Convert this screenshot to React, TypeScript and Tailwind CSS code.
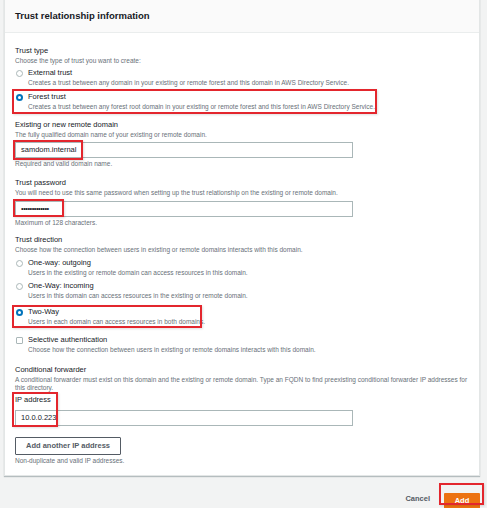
import React from 'react';

const RedBox = ({ className }: { className: string }) => (
  <div
    className={`pointer-events-none absolute border-2 border-[#e3262d] shadow-[1px_1px_2px_rgba(0,0,0,0.12)] ${className}`}
  />
);

const Radio = ({ checked }: { checked?: boolean }) =>
  checked ? (
    <span className="mt-[1.5px] flex h-[7px] w-[7px] shrink-0 items-center justify-center rounded-full bg-[#0073bb]">
      <span className="h-[3px] w-[3px] rounded-full bg-white" />
    </span>
  ) : (
    <span className="mt-[1.5px] h-[7px] w-[7px] shrink-0 rounded-full border border-[#aab7b8] bg-white" />
  );

interface OptionProps {
  title: string;
  desc: string;
  checked?: boolean;
  box?: boolean;
  className?: string;
}

const RadioOption = ({ title, desc, checked, box, className = '' }: OptionProps) => (
  <div className={`flex gap-[5px] pl-[1px] ${className}`}>
    {box ? (
      <span className="mt-[1.5px] h-[7px] w-[7px] shrink-0 rounded-[1px] border border-[#aab7b8] bg-white" />
    ) : (
      <Radio checked={checked} />
    )}
    <div>
      <p className="text-[7.5px] leading-[10px] text-[#16191f]">{title}</p>
      <p className="text-[6.5px] leading-[9px] text-[#687078]">{desc}</p>
    </div>
  </div>
);

const Label = ({ children, className = '' }: { children: React.ReactNode; className?: string }) => (
  <p className={`text-[7.5px] leading-[10px] text-[#16191f] ${className}`}>{children}</p>
);

const Desc = ({ children, className = '' }: { children: React.ReactNode; className?: string }) => (
  <p className={`text-[6.5px] leading-[9px] text-[#687078] ${className}`}>{children}</p>
);

const Input = ({ value, className = '' }: { value: string; className?: string }) => (
  <div
    className={`flex h-[16px] w-[338px] items-center border border-[#aab7b8] bg-white pl-[5px] text-[7.5px] text-[#16191f] ${className}`}
  >
    {value}
  </div>
);

export default function App() {
  return (
    <div
      className="min-h-[508px] w-[487px] bg-[#f2f3f3] pl-[4px] pr-[7px]"
      style={{ fontFamily: '"Liberation Sans", Arial, sans-serif' }}
    >
      <div className="-mt-px border border-[#e3e6e6] bg-white shadow-[0_1px_1px_rgba(0,28,36,0.25)]">
        <div className="flex h-[33px] items-center border-b border-[#eaeded] bg-[#fafafa] px-[10px]">
          <h2 className="text-[9.5px] font-bold text-[#16191f]">Trust relationship information</h2>
        </div>

        <div className="px-[10px] pb-[10px] pt-[13px]">
          <Label>Trust type</Label>
          <Desc>Choose the type of trust you want to create:</Desc>
          <RadioOption
            className="mt-[3px]"
            title="External trust"
            desc="Creates a trust between any domain in your existing or remote forest and this domain in AWS Directory Service."
          />
          <div className="relative mt-[5px]">
            <RadioOption
              checked
              title="Forest trust"
              desc="Creates a trust between any forest root domain in your existing or remote forest and this forest in AWS Directory Service."
            />
            <RedBox className="-left-[3px] -top-[3px] h-[25px] w-[365px]" />
          </div>

          <Label className="mt-[9px]">Existing or new remote domain</Label>
          <Desc>The fully qualified domain name of your existing or remote domain.</Desc>
          <div className="relative mt-[3px]">
            <Input value="samdom.internal" />
            <RedBox className="-left-[2px] -top-[2px] h-[20px] w-[70px]" />
          </div>
          <Desc className="mt-[1px]">Required and valid domain name.</Desc>

          <Label className="mt-[10px]">Trust password</Label>
          <Desc>You will need to use this same password when setting up the trust relationship on the existing or remote domain.</Desc>
          <div className="relative mt-[4px]">
            <Input value="•••••••••••••" className="text-[6px] tracking-[-0.5px]" />
            <RedBox className="-left-[2px] -top-[2px] h-[18px] w-[51px]" />
          </div>
          <Desc className="mt-[1px]">Maximum of 128 characters.</Desc>

          <Label className="mt-[8px]">Trust direction</Label>
          <Desc>Choose how the connection between users in existing or remote domains interacts with this domain.</Desc>
          <RadioOption
            className="mt-[4px]"
            title="One-way: outgoing"
            desc="Users in the existing or remote domain can access resources in this domain."
          />
          <RadioOption
            className="mt-[4px]"
            title="One-Way: incoming"
            desc="Users in this domain can access resources in the existing or remote domain."
          />
          <div className="relative mt-[7px]">
            <RadioOption
              checked
              title="Two-Way"
              desc="Users in each domain can access resources in both domains."
            />
            <RedBox className="-left-[3px] -top-[2px] h-[23px] w-[190px]" />
          </div>
          <RadioOption
            box
            className="mt-[9px]"
            title="Selective authentication"
            desc="Choose how the connection between users in existing or remote domains interacts with this domain."
          />

          <Label className="mt-[11px]">Conditional forwarder</Label>
          <p className="mt-[1px] text-[6.5px] leading-[8px] text-[#687078]">
            A conditional forwarder must exist on this domain and the existing or remote domain. Type an FQDN to find preexisting conditional forwarder IP addresses for this directory.
          </p>
          <div className="relative mt-[3px]">
            <Label>IP address</Label>
            <Input value="10.0.0.223" className="mt-[5px] h-[15px]" />
            <RedBox className="-left-[3px] -top-[3px] h-[35px] w-[46px]" />
          </div>
          <button className="mt-[11px] h-[18px] w-[106px] rounded-[1px] border border-[#545b64] bg-white text-[7.5px] font-bold text-[#545b64]">
            Add another IP address
          </button>
          <Desc className="mt-[1px]">Non-duplicate and valid IP addresses.</Desc>
        </div>
      </div>

      <div className="mt-[10px] flex items-center justify-end gap-[14px]">
        <span className="text-[7.5px] font-bold text-[#545b64]">Cancel</span>
        <div className="relative">
          <button className="h-[17px] w-[36px] rounded-[1px] bg-[#ec7211] text-[7.5px] font-bold text-white">Add</button>
          <RedBox className="-left-[5px] -top-[3px] h-[22px] w-[45px]" />
        </div>
      </div>
    </div>
  );
}
